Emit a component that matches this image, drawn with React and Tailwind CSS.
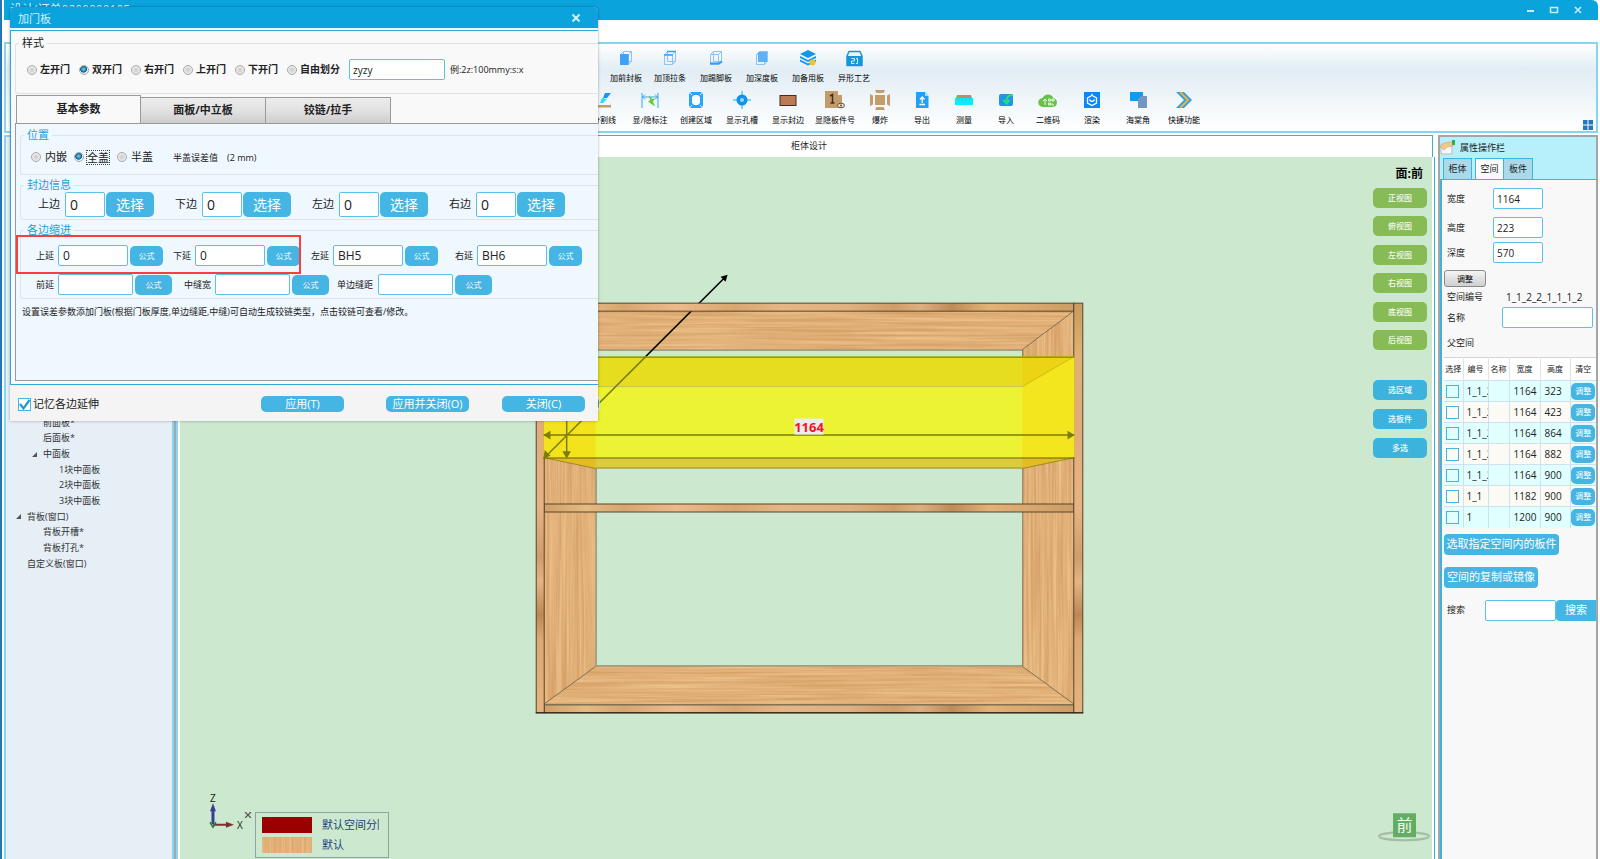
import React from "react";

const blueBtn = "bg-[#45b6e4] text-white flex items-center justify-center whitespace-nowrap shrink-0";
const textBox = "bg-white border border-[#5cc0e8] rounded-[2px] text-[#222] min-w-0 outline-none shrink-0";
const radio =
  "appearance-none size-[10px] shrink-0 rounded-full border border-[#a9a9a9] bg-[radial-gradient(circle,#d2d2d2_20%,#f2f2f2_80%)] checked:bg-[radial-gradient(circle_at_45%_40%,#5cc4ee_10%,#135a86_48%,#e8f0f4_58%)]";

/* ---------- toolbar icons ---------- */

function Box3D({ children }) {
  return (
    <svg width="16" height="16" viewBox="0 0 16 16" fill="none" stroke="#8cc4f4" strokeWidth="1">
      <path d="M2.5 4.5h8v10h-8zM5.5 1.5h8v10M2.5 4.5l3-3M10.5 4.5l3-3M10.5 14.5l3-3M5.5 1.5v10M5.5 11.5h8" />
      {children}
    </svg>
  );
}

const icons = {
  front: (
    <Box3D>
      <path d="M2 4h8.500v11H2z" fill="#3ea2f6" stroke="none" />
    </Box3D>
  ),
  top: (
    <Box3D>
      <path d="M5 1.500h9M2 5h9" stroke="#3ea2f6" strokeWidth="1.500" />
    </Box3D>
  ),
  foot: (
    <Box3D>
      <path d="M2 13.500h9l3-2" stroke="#2f9bf6" strokeWidth="2" />
    </Box3D>
  ),
  depth: (
    <Box3D>
      <path d="M4 2h9v10H4z" fill="#5fb1f6" stroke="none" />
    </Box3D>
  ),
  layers: (
    <svg width="16" height="16" viewBox="0 0 16 16">
      <path d="M8 0l8 4-8 4-8-4z" fill="#1098ea" />
      <path d="M0 6l8 4 8-4v2l-8 4-8-4zM0 9.500l8 4 8-4v2l-8 4-8-4z" fill="#1098ea" />
      <circle cx="12.500" cy="12.500" r="3" fill="#f6c32c" />
    </svg>
  ),
  craft: (
    <svg width="17" height="17" viewBox="0 0 17 17">
      <path d="M1 6l2-4.500h11L16 6v9.500H1z" fill="#e9f5fb" stroke="#1596d8" strokeWidth="1.500" strokeLinejoin="round" />
      <path d="M1 6h15v9.500H1z" fill="#1596d8" />
      <path d="M5.500 8.500h3v2.500h-3v2.500h3M10 8.500h1.500v5H10" stroke="#d8f0fc" fill="none" />
    </svg>
  ),
  split: (
    <svg width="18" height="18" viewBox="0 0 18 18">
      <path d="M10 2h6l-4 5H8z" fill="#1e90ff" />
      <path d="M7 7l5 1-4 4H5z" fill="#1fe3ef" />
      <path d="M1 14h15v2.500H1z" fill="#c09a70" />
    </svg>
  ),
  dims: (
    <svg width="18" height="18" viewBox="0 0 18 18" fill="none">
      <path d="M1 2v15M17 2v15M1 6h16M4 3.500L1.500 6 4 8.500M14 3.500L16.500 6 14 8.500" stroke="#3aa6e8" />
      <path d="M8 4l3 4 3-.5-2 3 2 5-7-5 2-1z" fill="#66cc33" />
    </svg>
  ),
  region: (
    <svg width="16" height="18" viewBox="0 0 16 18">
      <path d="M3 1h10l2 2v12l-2 2H3l-2-2V3z" fill="#2aa4fb" />
      <path d="M6 4h4l2 2v6l-2 2H6l-2-2V6z" fill="#f5fafd" />
      <path d="M1 1l3 3M15 1l-3 3M1 17l3-3M15 17l-3-3" stroke="#d8ecf8" />
    </svg>
  ),
  hole: (
    <svg width="18" height="18" viewBox="0 0 18 18">
      <path d="M9 0v18M0 9h18" stroke="#45d4f4" strokeWidth="1.500" />
      <circle cx="9" cy="9" r="5.500" fill="#1590ea" />
      <circle cx="9" cy="9" r="2" fill="#8fdcff" />
    </svg>
  ),
  edge: (
    <svg width="18" height="18" viewBox="0 0 18 18">
      <rect x="1" y="4.500" width="16" height="10" fill="#bd7a56" stroke="#432c20" />
    </svg>
  ),
  number: (
    <svg width="20" height="18" viewBox="0 0 20 18">
      <path d="M0 0h13v17H0zM13 4h4v13h-4z" fill="#c49c6c" />
      <path d="M5 5l2.500-1.500V12M5.500 12h4" stroke="#3e2e20" strokeWidth="1.500" fill="none" />
      <ellipse cx="16" cy="14.500" rx="3.500" ry="2.300" fill="#e8dccb" stroke="#6b5136" />
      <circle cx="16" cy="14.500" r="1" fill="#6b5136" />
    </svg>
  ),
  explode: (
    <svg width="20" height="20" viewBox="0 0 20 20" fill="#c49c6c">
      <path d="M5 5h10v10H5zM5 0h10l-1.500 3h-7zM5 20h10l-1.500-3h-7zM0 4l3 1.500v9L0 16zM20 4l-3 1.500v9l3 1.500z" />
    </svg>
  ),
  exportFile: (
    <svg width="14" height="16" viewBox="0 0 14 16">
      <path d="M1 0h9l3.500 4v12H1z" fill="#22a0f8" />
      <path d="M10 0l3.500 4H10z" fill="#a9dcff" />
      <path d="M7.200 11V5.500M5 7.500l2.200-2.500 2.300 2.500M4.500 12.500h5.500" stroke="#fff" strokeWidth="1.300" fill="none" />
    </svg>
  ),
  measure: (
    <svg width="18" height="16" viewBox="0 0 18 16">
      <path d="M2 3h14l1 3H1z" fill="#b98f6c" />
      <path d="M0 6h18v7H0z" fill="#06eefa" />
      <path d="M4 6v3M7.500 6v3M11 6v3M14.500 6v3" stroke="#2bc7da" />
    </svg>
  ),
  importFile: (
    <svg width="16" height="16" viewBox="0 0 16 16">
      <rect x="1" y="2" width="14" height="12" rx="2" fill="#2196e6" />
      <path d="M15 3c-4 0-6.500 1-6.500 6M5.500 8l3 3.500L11.500 8" stroke="#27e07c" strokeWidth="2" fill="none" />
    </svg>
  ),
  cloud: (
    <svg width="20" height="16" viewBox="0 0 20 16">
      <path d="M5 15a4.500 4.500 0 0 1-.500-9A6 6 0 0 1 15.500 6 4.600 4.600 0 0 1 15 15z" fill="#67c24a" />
      <path d="M7 13V7M5 9l2-2 2 2M10.500 7h2v2h-2zM14 7h2v2h-2zM10.500 11h2v2h-2zM14 11v2h2" stroke="#e9f8e2" fill="none" />
    </svg>
  ),
  render: (
    <svg width="18" height="18" viewBox="0 0 18 18">
      <path d="M1 1h16v16H1z" fill="#0b86fb" />
      <path d="M9 3.500l1 1.500 3.500 2v5L9 14.500 4.500 12V7L8 5z" stroke="#fff" strokeWidth="1.300" fill="none" />
      <path d="M6.500 8.500c1 2.500 4 2.500 5 0" stroke="#fff" strokeWidth="1.300" fill="none" />
    </svg>
  ),
  corner: (
    <svg width="18" height="18" viewBox="0 0 18 18">
      <path d="M1 1h13v9H1z" fill="#0a9df0" />
      <path d="M9 8l3-3h6v12H9z" fill="#7396c4" />
    </svg>
  ),
  quick: (
    <svg width="18" height="18" viewBox="0 0 18 18" fill="none">
      <path d="M1 1h8l8 8-8 8H1l8-8z" fill="#2c9ee2" />
      <path d="M5 1l8 8-8 8" stroke="#f2b13c" strokeWidth="2" />
    </svg>
  ),
};

function Tool({ icon, label, width }) {
  return (
    <button className={`flex flex-col items-center gap-1 shrink-0 ${width}`}>
      <span className="h-5 flex items-center justify-center">{icons[icon]}</span>
      <span className="text-[8px] leading-[12px] whitespace-nowrap text-black">{label}</span>
    </button>
  );
}

const toolsTop = [
  ["front", "加前封板", "w-[42px]"],
  ["top", "加顶拉条", "w-[46px]"],
  ["foot", "加踢脚板", "w-[46px]"],
  ["depth", "加深度板", "w-[46px]"],
  ["layers", "加备用板", "w-[46px]"],
  ["craft", "异形工艺", "w-[46px]"],
];
const toolsBottom = [
  ["split", "分割线", "w-[46px]"],
  ["dims", "显/隐标注", "w-[46px]"],
  ["region", "创建区域", "w-[46px]"],
  ["hole", "显示孔槽", "w-[46px]"],
  ["edge", "显示封边", "w-[46px]"],
  ["number", "显隐板件号", "w-[48px]"],
  ["explode", "爆炸", "w-[42px]"],
  ["exportFile", "导出", "w-[42px]"],
  ["measure", "测量", "w-[42px]"],
  ["importFile", "导入", "w-[42px]"],
  ["cloud", "二维码", "w-[42px]"],
  ["render", "渲染", "w-[46px]"],
  ["corner", "海棠角", "w-[46px]"],
  ["quick", "快捷功能", "w-[46px]"],
];

/* ---------- window chrome ---------- */

function TitleBar() {
  return (
    <header className="h-5 shrink-0 bg-[#0aa3dc] flex items-center justify-between pl-[6px] pr-[15px] rounded-tr-md">
      <h1 className="text-[12px] leading-5 text-[#d5f1fc]">设计(订单0200000105</h1>
      <div className="flex items-center gap-[14px] text-[#c9ecfa]">
        <button aria-label="最小化" className="block">
          <svg width="10" height="10" viewBox="0 0 10 10"><path d="M2 6h7" stroke="currentColor" strokeWidth="2" /></svg>
        </button>
        <button aria-label="最大化" className="block">
          <svg width="10" height="10" viewBox="0 0 10 10"><path d="M1.500 2.500h7v5h-7z" stroke="currentColor" strokeWidth="1.500" fill="none" /></svg>
        </button>
        <button aria-label="关闭窗口" className="block">
          <svg width="10" height="10" viewBox="0 0 10 10"><path d="M2 2l6 6M8 2L2 8" stroke="currentColor" strokeWidth="1.600" /></svg>
        </button>
      </div>
    </header>
  );
}

function Ribbon() {
  return (
    <div className="relative h-[91px] shrink-0 border-2 border-[#8ad3ee] bg-gradient-to-b from-white via-[#e1edf4] via-30% to-white pt-[4px]">
      <div className="flex h-[42px] pl-[599px]">
        {toolsTop.map(([i, l, w]) => <Tool key={l} icon={i} label={l} width={w} />)}
      </div>
      <div className="flex pl-[575px]">
        {toolsBottom.map(([i, l, w]) => <Tool key={l} icon={i} label={l} width={w} />)}
      </div>
      <button aria-label="布局" className="absolute right-[3px] bottom-[1px]">
        <svg width="10" height="10" viewBox="0 0 10 10" fill="#2079bd"><path d="M0 0h4.500v4.500H0zM5.500 0H10v4.500H5.500zM0 5.500h4.500V10H0zM5.500 5.500H10V10H5.500z" /></svg>
      </button>
    </div>
  );
}

const tree = [
  ["前面板*", "pl-[37px]", false],
  ["后面板*", "pl-[37px]", false],
  ["中面板", "pl-[25px]", true],
  ["1块中面板", "pl-[53px]", false],
  ["2块中面板", "pl-[53px]", false],
  ["3块中面板", "pl-[53px]", false],
  ["背板(窗口)", "pl-[9px]", true],
  ["背板开槽*", "pl-[37px]", false],
  ["背板打孔*", "pl-[37px]", false],
  ["自定义板(窗口)", "pl-[21px]", false],
];

function TreePanel() {
  return (
    <aside className="w-[170px] shrink-0 border-x-2 border-t-2 border-[#85d4f3] bg-[#e6eef6] pt-[278px]">
      <ul className="text-[9px] text-[#333] flex flex-col h-[156px] justify-between">
        {tree.map(([label, pad, open]) => (
          <li key={label} className={`flex items-center h-[15px] gap-1 whitespace-nowrap ${pad}`}>
            {open && <svg width="8" height="8" viewBox="0 0 8 8"><path d="M6 2v5H1z" fill="#555" /></svg>}
            {label}
          </li>
        ))}
      </ul>
    </aside>
  );
}

/* ---------- 3D view ---------- */

function WoodFilter({ id, freq, seed }) {
  return (
    <filter id={id} x="0" y="0" width="100%" height="100%" colorInterpolationFilters="sRGB">
      <feTurbulence type="fractalNoise" baseFrequency={freq} numOctaves="3" seed={seed} />
      <feColorMatrix values="0.16 0 0 0 0.80  0.2 0 0 0 0.59  0.22 0 0 0 0.36  0 0 0 0 1" />
      <feComposite in2="SourceGraphic" operator="in" />
    </filter>
  );
}

function Cabinet() {
  return (
    <svg className="w-full h-full block" viewBox="180 158 1253 701" preserveAspectRatio="xMidYMid meet">
      <defs>
        <WoodFilter id="grainH" freq="0.008 0.4" seed="4" />
        <WoodFilter id="grainV" freq="0.4 0.008" seed="7" />
        <linearGradient id="edgeH" x1="0" x2="1" y1="0" y2="0">
          <stop offset="0" stopColor="#d2a06a" /><stop offset=".08" stopColor="#e4bb80" />
          <stop offset=".15" stopColor="#d8a572" /><stop offset=".25" stopColor="#edbb8b" />
          <stop offset=".36" stopColor="#d9a672" /><stop offset=".45" stopColor="#e5b685" />
          <stop offset=".58" stopColor="#dfb080" /><stop offset=".66" stopColor="#cf9d68" />
          <stop offset=".71" stopColor="#deaf80" /><stop offset=".77" stopColor="#be8c58" />
          <stop offset=".84" stopColor="#e2b277" /><stop offset="1" stopColor="#cd9d66" />
        </linearGradient>
        <linearGradient id="edgeV" x1="0" x2="0" y1="0" y2="1">
          <stop offset="0" stopColor="#c99a60" /><stop offset=".12" stopColor="#dfb074" />
          <stop offset=".3" stopColor="#e3ab7c" /><stop offset=".5" stopColor="#e8b384" />
          <stop offset=".62" stopColor="#cf9c6c" /><stop offset=".68" stopColor="#e8b384" />
          <stop offset=".76" stopColor="#bd8855" /><stop offset=".82" stopColor="#dda873" />
          <stop offset="1" stopColor="#e5b47e" />
        </linearGradient>
      </defs>

      <g filter="url(#grainH)">
        <path d="M544 311h531l-52 39H596z" />
        <path d="M544 705h531l-52-38H596z" />
      </g>
      <g filter="url(#grainV)">
        <path d="M544 311l52 39v317l-52 38z" />
        <path d="M1075 311l-52 39v317l52 38z" />
      </g>
      <g stroke="#5e4a30" strokeOpacity=".7" fill="none">
        <path d="M596.500 350.500h427v316h-427z" />
        <path d="M544 311l52 39M1075 311l-52 39M544 705l52-38M1075 705l-52-38" />
      </g>

      <path d="M726 277L646 357" stroke="#000" strokeWidth="1.500" />
      <path d="M728 275l-2 7-5-5z" fill="#000" />

      <g stroke="#54462c">
        <rect x="544.500" y="303.500" width="530" height="8" fill="url(#edgeH)" />
        <rect x="544.500" y="504.500" width="530" height="8" fill="url(#edgeH)" />
        <rect x="544.500" y="705.500" width="530" height="8" fill="url(#edgeH)" />
        <rect x="536.500" y="303.500" width="8" height="410" fill="url(#edgeV)" />
        <rect x="1074.500" y="303.500" width="9" height="410" fill="url(#edgeV)" />
      </g>
      <path d="M536 713.500h548" stroke="#1d140a" />

      <path d="M544 357h531v30h-531z" fill="#e6dd20" />
      <path d="M544 387h531v71h-531z" fill="#ebf332" />
      <path d="M544 458h531l-52 11H596z" fill="#dccb40" />
      <path d="M544 458v-101l52 30v71z" fill="#f2e31c" />
      <path d="M1075 458v-101l-52 30v71z" fill="#f3e51e" />
      <path d="M1023 357h52l-52 30z" fill="#ecd414" />
      <path d="M544 458h52v11zM1075 458h-52v11z" fill="#e3bb27" />
      <g stroke="#6b6a00" fill="none">
        <path d="M544 357.500h531M544 458.500h531" />
        <path d="M596 468.500h427M544 458l52 11M1075 458l-52 11" strokeOpacity=".6" />
        <path d="M596 387h427l52-30" strokeOpacity=".25" />
      </g>
      <g stroke="#7c7d06" strokeWidth="1.500" fill="#7c7d06">
        <path d="M544 435.500h531M567 357v101M646 357L545 458" />
        <path d="M545 435.500l5-3v6zM1074 435.500l-5-3v6zM567 457.500l-3-5h6zM544.500 458l1-6 4 4z" />
      </g>
      <rect x="592" y="397" width="8" height="14" fill="#e4efe0" />
      <path d="M597 400h2v8h-2z" fill="#0f8f3c" />
      <rect x="795" y="419" width="29" height="16" fill="#ececec" />
      <text x="809.500" y="432" textAnchor="middle" fontSize="13" fontWeight="700" fill="#f0141e">1164</text>

      <g>
        <path d="M213 825v-15" stroke="#3c3c94" strokeWidth="3" />
        <path d="M213 804l3 8h-6z" fill="#3c3c94" />
        <path d="M213 825.500h15" stroke="#7a3034" strokeWidth="2" />
        <path d="M234 825.500l-8 3v-6z" fill="#7a3034" />
        <path d="M210 823l3 5 3-5" stroke="#2c7c44" strokeWidth="1.500" fill="none" />
        <text x="213" y="803" textAnchor="middle" fontSize="10" fill="#222">Z</text>
        <text x="240" y="830" textAnchor="middle" fontSize="10" fill="#222">X</text>
      </g>

      <ellipse cx="1405" cy="837" rx="25" ry="4" fill="none" stroke="#a3bda6" strokeWidth="2" />
      <path d="M1394 814h23v24h-23z" fill="#63ad63" />
      <text x="1405.500" y="832" textAnchor="middle" fontSize="16" fill="#f3faf1">前</text>
    </svg>
  );
}

const viewButtons = ["正视图", "俯视图", "左视图", "右视图", "底视图", "后视图"];
const pickButtons = ["选区域", "选板件", "多选"];

function Viewport() {
  return (
    <main className="flex-1 min-w-0 flex flex-col">
      <h2 className="h-[22px] shrink-0 bg-white border-t border-r border-[#3aaedd] mr-[2px] pl-2 text-[9px] leading-[20px] text-center text-[#222]">柜体设计</h2>
      <div className="flex-1 min-h-0 border-r border-[#3aaedd] bg-white pl-[2px] pr-[2px]">
        <div className="relative h-full overflow-hidden bg-[#cce8cf]">
          <Cabinet />
          <div className="absolute right-[5px] top-2 flex flex-col items-end">
            <p className="text-[12px] leading-[18px] font-bold text-black pr-[4px]">面:前</p>
            <div className="mt-[5px] flex h-[162px] flex-col justify-between">
              {viewButtons.map((b) => (
                <button key={b} className="w-[54px] h-5 rounded-[5px] bg-[#86bb55] text-[#f4faee] text-[8px] font-medium">{b}</button>
              ))}
            </div>
            <div className="mt-[30px] flex h-[78px] flex-col justify-between">
              {pickButtons.map((b) => (
                <button key={b} className="w-[54px] h-5 rounded-[5px] bg-[#3cb3dc] text-[#f1fafe] text-[8px] font-medium">{b}</button>
              ))}
            </div>
          </div>
          <div className="absolute left-[63px] bottom-[1px] flex items-start gap-[2px]">
            <button aria-label="关闭图例" className="block">
              <svg width="10" height="6" viewBox="0 0 10 6"><path d="M2 0l6 6M8 0L2 6" stroke="#555" strokeWidth="1.200" /></svg>
            </button>
            <ul className="w-[134px] border border-[#8ba6a2] px-[6px] py-[2px] text-[11px] text-[#1d3f7f]">
              <li className="flex items-center gap-[10px] h-5">
                <span className="w-[50px] h-4 shrink-0 bg-[#990000]" />
                <span className="w-[57px] overflow-hidden whitespace-nowrap">默认空间分隔</span>
              </li>
              <li className="flex items-center gap-[10px] h-5">
                <svg className="w-[50px] h-4 shrink-0"><rect width="50" height="16" filter="url(#grainV)" /></svg>
                <span>默认</span>
              </li>
            </ul>
          </div>
        </div>
      </div>
    </main>
  );
}

/* ---------- property panel ---------- */

const spaces = [
  ["1_1_2", "1164", "323"],
  ["1_1_2", "1164", "423"],
  ["1_1_2", "1164", "864"],
  ["1_1_2", "1164", "882"],
  ["1_1_2", "1164", "900"],
  ["1_1", "1182", "900"],
  ["1", "1200", "900"],
];

function SizeField({ id, label, value, className }) {
  return (
    <div className={`flex items-center ${className}`}>
      <label htmlFor={id} className="w-[46px]">{label}</label>
      <input id={id} defaultValue={value} className={`${textBox} w-[50px] h-[21px] px-[3px] text-[10px]`} />
    </div>
  );
}

function PropertyPanel() {
  return (
    <aside className="w-[160px] shrink-0 ml-[3px] border-x-2 border-t-2 border-[#a5a5a5] bg-[#b7f0fb] flex flex-col text-[9px] text-[#222]">
      <div className="flex items-center gap-1 h-[21px] shrink-0">
        <svg width="16" height="15" viewBox="0 0 16 15">
          <path d="M1 4h11v10H1z" fill="#f4f6f8" stroke="#a9c3d6" />
          <path d="M0 7c3-4 6-5 11-5l3 1-1 3-6 1-3 3z" fill="#efc987" stroke="#c99d54" strokeWidth=".5" />
          <path d="M12 0h3v5h-3z" fill="#2fae58" />
        </svg>
        <h2 className="leading-[20px]">属性操作栏</h2>
      </div>
      <div role="tablist" className="flex h-[21px] shrink-0 pl-[3px]">
        <button role="tab" className="w-[29px] bg-[#aad9e9] border-x border-t border-[#3fb2e0]">柜体</button>
        <button role="tab" aria-selected="true" className="w-[28px] ml-[3px] bg-[#fafafa] border-t border-l border-[#3fb2e0]">空间</button>
        <button role="tab" className="w-[30px] bg-[#aad9e9] border-x border-t border-[#3fb2e0]">板件</button>
      </div>
      <div className="flex-1 bg-[#f8f8f8] border-l-2 border-t border-[#3fb2e0] pt-2 overflow-hidden">
        <div className="pl-[5px]">
          <SizeField id="w" label="宽度" value="1164" className="mb-[8px]" />
          <SizeField id="h" label="高度" value="223" className="mb-[4px]" />
          <SizeField id="d" label="深度" value="570" className="" />
        </div>
        <button className="ml-[2px] mt-[7px] w-[42px] h-[17px] block rounded-[3px] border border-[#8a8a8a] bg-gradient-to-b from-[#f4f4f4] to-[#cfcfcf] text-[8px] text-black">调整</button>
        <div className="flex items-center h-5 pl-[5px]">
          <span className="w-[59px]">空间编号</span>
          <span className="text-[10px]">1_1_2_2_1_1_1_2</span>
        </div>
        <div className="flex items-center h-[21px] pl-[5px] pr-[3px]">
          <label htmlFor="name" className="w-[55px] shrink-0">名称</label>
          <input id="name" className={`${textBox} flex-1 h-[21px] px-[3px] text-[10px]`} />
        </div>
        <p className="h-[29px] leading-[29px] pl-[5px]">父空间</p>
        <table className="ml-[2px] w-[152px] table-fixed border-collapse">
          <colgroup>
            <col className="w-[19px]" /><col className="w-[25px]" /><col className="w-[21px]" />
            <col className="w-[31px]" /><col className="w-[30px]" /><col />
          </colgroup>
          <thead>
            <tr className="h-[23px] bg-white text-[8px] border-t border-[#d5d5d5]">
              {["选择", "编号", "名称", "宽度", "高度", "清空"].map((h) => (
                <th key={h} className="p-0 font-normal whitespace-nowrap border-r border-[#dde4ea] last:border-r-0">{h}</th>
              ))}
            </tr>
          </thead>
          <tbody>
            {spaces.map(([no, w, h], i) => (
              <tr key={i} className="h-[21px] border-t border-[#cfe0f2] odd:bg-[#e0ffff] even:bg-[#fbfaf4]">
                <td className="p-0 pl-[2px] border-r border-[#cfe0f2]">
                  <input type="checkbox" aria-label={`选择 ${no}`} className="block appearance-none size-[13px] border border-[#45b6e4]" />
                </td>
                <td className="p-0 border-r border-[#cfe0f2] text-[10px]"><span className="block ml-[3px] w-[21px] overflow-hidden">{no}</span></td>
                <td className="p-0 border-r border-[#cfe0f2]" />
                <td className="p-0 pl-1 border-r border-[#cfe0f2] text-[10px]">{w}</td>
                <td className="p-0 pl-1 border-r border-[#cfe0f2] text-[10px]">{h}</td>
                <td className="p-0"><button className={`${blueBtn} w-[24px] h-[17px] mx-auto rounded-[5px] text-[8px]`}>调整</button></td>
              </tr>
            ))}
          </tbody>
        </table>
        <div className="pl-[2px] mt-[6px] flex flex-col items-start gap-3">
          <button className={`${blueBtn} w-[115px] h-[21px] rounded-[4px] text-[11px]`}>选取指定空间内的板件</button>
          <button className={`${blueBtn} w-[94px] h-[21px] rounded-[4px] text-[11px]`}>空间的复制或镜像</button>
        </div>
        <div className="flex items-center mt-3 pl-[5px]">
          <label htmlFor="search" className="w-[38px] shrink-0">搜索</label>
          <input id="search" className={`${textBox} w-[71px] h-[21px] px-[3px] text-[10px]`} />
          <button className={`${blueBtn} flex-1 h-[21px] rounded-l-[4px] text-[11px]`}>搜索</button>
        </div>
      </div>
    </aside>
  );
}

/* ---------- door dialog ---------- */

function Group({ title, className, titleClass, children }) {
  return (
    <fieldset className={`min-w-0 border border-r-0 border-[#dfe3e8] rounded-l-[3px] ${className}`}>
      <legend className={`ml-[3px] px-[3px] text-[11px] leading-[14px] ${titleClass}`}>{title}</legend>
      {children}
    </fieldset>
  );
}

function EdgeField({ label }) {
  return (
    <div className="flex items-center">
      <label htmlFor={`e-${label}`} className="w-[27px] text-[11px] whitespace-nowrap">{label}</label>
      <input id={`e-${label}`} defaultValue="0" className={`${textBox} w-10 h-[25px] px-1 text-[14px]`} />
      <button className={`${blueBtn} ml-[1px] w-12 h-[25px] rounded-[5px] text-[14px]`}>选择</button>
    </div>
  );
}

function InsetField({ label, value, labelW, inputW, btnW }) {
  return (
    <div className="flex items-center">
      <label htmlFor={`i-${label}`} className={`${labelW} shrink-0 text-[9px] whitespace-nowrap`}>{label}</label>
      <input id={`i-${label}`} defaultValue={value} className={`${textBox} ${inputW} h-[21px] px-1 text-[12px]`} />
      <button className={`${blueBtn} ml-[2px] ${btnW} h-5 rounded-[5px] text-[8px]`}>公式</button>
    </div>
  );
}

const doorTypes = ["左开门", "双开门", "右开门", "上开门", "下开门", "自由划分"];

function DoorDialog() {
  const tab = "w-[125px] h-[26px] border border-b-0 border-[#9a9a9a] text-[11px] font-bold text-[#222]";
  return (
    <section role="dialog" aria-label="加门板" className="absolute left-[8px] top-[7px] w-[588px] shadow-[0_0_3px_rgba(0,0,0,0.35)] rounded-t-[5px] bg-[#f4f4f4] text-[#222]">
      <div className="h-[21px] flex items-center justify-between pl-2 pr-[17px] rounded-t-[5px] bg-[#0aa3dc] text-[#d5f1fc]">
        <h2 className="text-[11px] pt-[3px]">加门板</h2>
        <button aria-label="关闭" className="block">
          <svg width="10" height="10" viewBox="0 0 10 10"><path d="M1.500 1.500l7 7M8.500 1.500l-7 7" stroke="currentColor" strokeWidth="2" /></svg>
        </button>
      </div>
      <div className="relative mt-[2px] border-t border-b border-l border-[#2ea9dc] bg-[#f9f9f9] h-[355px] pl-[4px] pt-[5px] overflow-hidden">
        <Group title="样式" titleClass="text-[#222]" className="h-[58px]">
          <div className="flex items-center pl-[11px] pt-[9px] text-[10px] font-semibold">
            {doorTypes.map((t) => (
              <label key={t} className="flex items-center gap-[3px] min-w-[52px] whitespace-nowrap">
                <input type="radio" name="door" defaultChecked={t === "双开门"} className={radio} />
                {t}
              </label>
            ))}
            <input aria-label="自由划分" defaultValue="zyzy" className={`${textBox} ml-[9px] w-24 h-[21px] px-[3px] text-[10px] font-normal`} />
            <span className="ml-[5px] text-[9px] font-normal whitespace-nowrap">例:2z:100mmy:s:x</span>
          </div>
        </Group>
        <div role="tablist" className="flex items-end mt-[1px] pl-[1px]">
          <button role="tab" aria-selected="true" className="w-[125px] h-[28px] border border-b-0 border-[#9a9a9a] bg-[#f9f9f9] text-[11px] font-bold text-[#222]">基本参数</button>
          <button role="tab" className={`${tab} border-l-0 bg-gradient-to-b from-[#ececec] via-[#e2e2e2] via-50% to-[#cdcdcd]`}>面板/中立板</button>
          <button role="tab" className={`${tab} border-l-0 bg-gradient-to-b from-[#ececec] via-[#e2e2e2] via-50% to-[#cdcdcd]`}>铰链/拉手</button>
        </div>
        <div role="tabpanel" className="h-[258px] border border-r-0 border-[#9a9a9a] bg-[#eff7ff] pl-1 pt-[4px]">
          <Group title="位置" titleClass="text-[#1ba1d8]" className="h-[47px]">
            <div className="flex items-center pl-[10px] pt-[7px] text-[11px]">
              <label className="flex items-center gap-1 w-[43px]"><input type="radio" name="pos" className={radio} />内嵌</label>
              <label className="flex items-center gap-[3px] w-[43px]">
                <input type="radio" name="pos" defaultChecked className={radio} />
                <span className="leading-[13px] outline outline-1 outline-dotted outline-[#444]">全盖</span>
              </label>
              <label className="flex items-center gap-1"><input type="radio" name="pos" className={radio} />半盖</label>
              <span className="ml-[20px] text-[9px]">半盖误差值</span>
              <span className="ml-[9px] text-[9px]">(2 mm)</span>
            </div>
          </Group>
          <Group title="封边信息" titleClass="text-[#1ba1d8]" className="h-[42px] mt-[3px]">
            <div className="flex gap-[21px] pl-[17px]">
              {["上边", "下边", "左边", "右边"].map((l) => <EdgeField key={l} label={l} />)}
            </div>
          </Group>
          <Group title="各边缩进" titleClass="text-[#1ba1d8]" className="h-[76px] mt-[3px]">
            <div className="grid grid-cols-[137px_138px_144px_auto] pl-[15px] pt-[8px]">
              <InsetField label="上延" value="0" labelW="w-[22px]" inputW="w-[70px]" btnW="w-[33px]" />
              <InsetField label="下延" value="0" labelW="w-[22px]" inputW="w-[70px]" btnW="w-[33px]" />
              <InsetField label="左延" value="BH5" labelW="w-[22px]" inputW="w-[70px]" btnW="w-[33px]" />
              <InsetField label="右延" value="BH6" labelW="w-[22px]" inputW="w-[70px]" btnW="w-[33px]" />
            </div>
            <div className="flex pl-[15px] pt-2">
              <InsetField label="前延" value="" labelW="w-[22px]" inputW="w-[75px]" btnW="w-[37px]" />
              <div className="pl-3"><InsetField label="中缝宽" value="" labelW="w-[31px]" inputW="w-[75px]" btnW="w-[37px]" /></div>
              <div className="pl-2"><InsetField label="单边缝距" value="" labelW="w-[41px]" inputW="w-[75px]" btnW="w-[37px]" /></div>
            </div>
          </Group>
          <p className="pl-[2px] pt-[6px] text-[9px] leading-[14px]">设置误差参数添加门板(根据门板厚度,单边缝距,中缝)可自动生成铰链类型，点击铰链可查看/修改。</p>
        </div>
        <div className="absolute left-[5px] top-[204px] w-[285px] h-[39px] border-2 border-[#f4403f]" />
      </div>
      <div className="flex items-center h-[36px] pl-2 pt-[2px]">
        <label className="flex items-center gap-[2px] w-[243px] text-[11px]">
          <span className="relative block size-[13px] shrink-0">
            <input type="checkbox" defaultChecked className="block appearance-none size-[13px] bg-white border border-[#45b6e4]" />
            <svg className="absolute inset-0 pointer-events-none" width="13" height="13" viewBox="0 0 13 13"><path d="M2 6l3.500 4.500L11.500 2" stroke="#1e9bd4" strokeWidth="2.200" fill="none" /></svg>
          </span>
          记忆各边延伸
        </label>
        <button className={`${blueBtn} w-[83px] h-4 rounded-[5px] text-[11px]`}>应用(T)</button>
        <button className={`${blueBtn} ml-[42px] w-[83px] h-4 rounded-[5px] text-[11px]`}>应用并关闭(O)</button>
        <button className={`${blueBtn} ml-[33px] w-[83px] h-4 rounded-[5px] text-[11px]`}>关闭(C)</button>
      </div>
    </section>
  );
}

export default function App() {
  return (
    <div className="relative h-screen min-h-[640px] overflow-hidden flex flex-col bg-white pl-[2px] pr-[2px] border-l-2 border-[#2474b8] font-['Open_Sans','Noto_Sans_CJK_SC',sans-serif]">
      <TitleBar />
      <nav className="h-[22px] shrink-0 bg-white" />
      <Ribbon />
      <div className="flex-1 min-h-0 flex pt-[2px]">
        <TreePanel />
        <div className="w-1 shrink-0 border-x-2 border-l-[#a0a8b0] border-r-[#8fd6f5]" />
        <Viewport />
        <PropertyPanel />
      </div>
      <DoorDialog />
    </div>
  );
}
